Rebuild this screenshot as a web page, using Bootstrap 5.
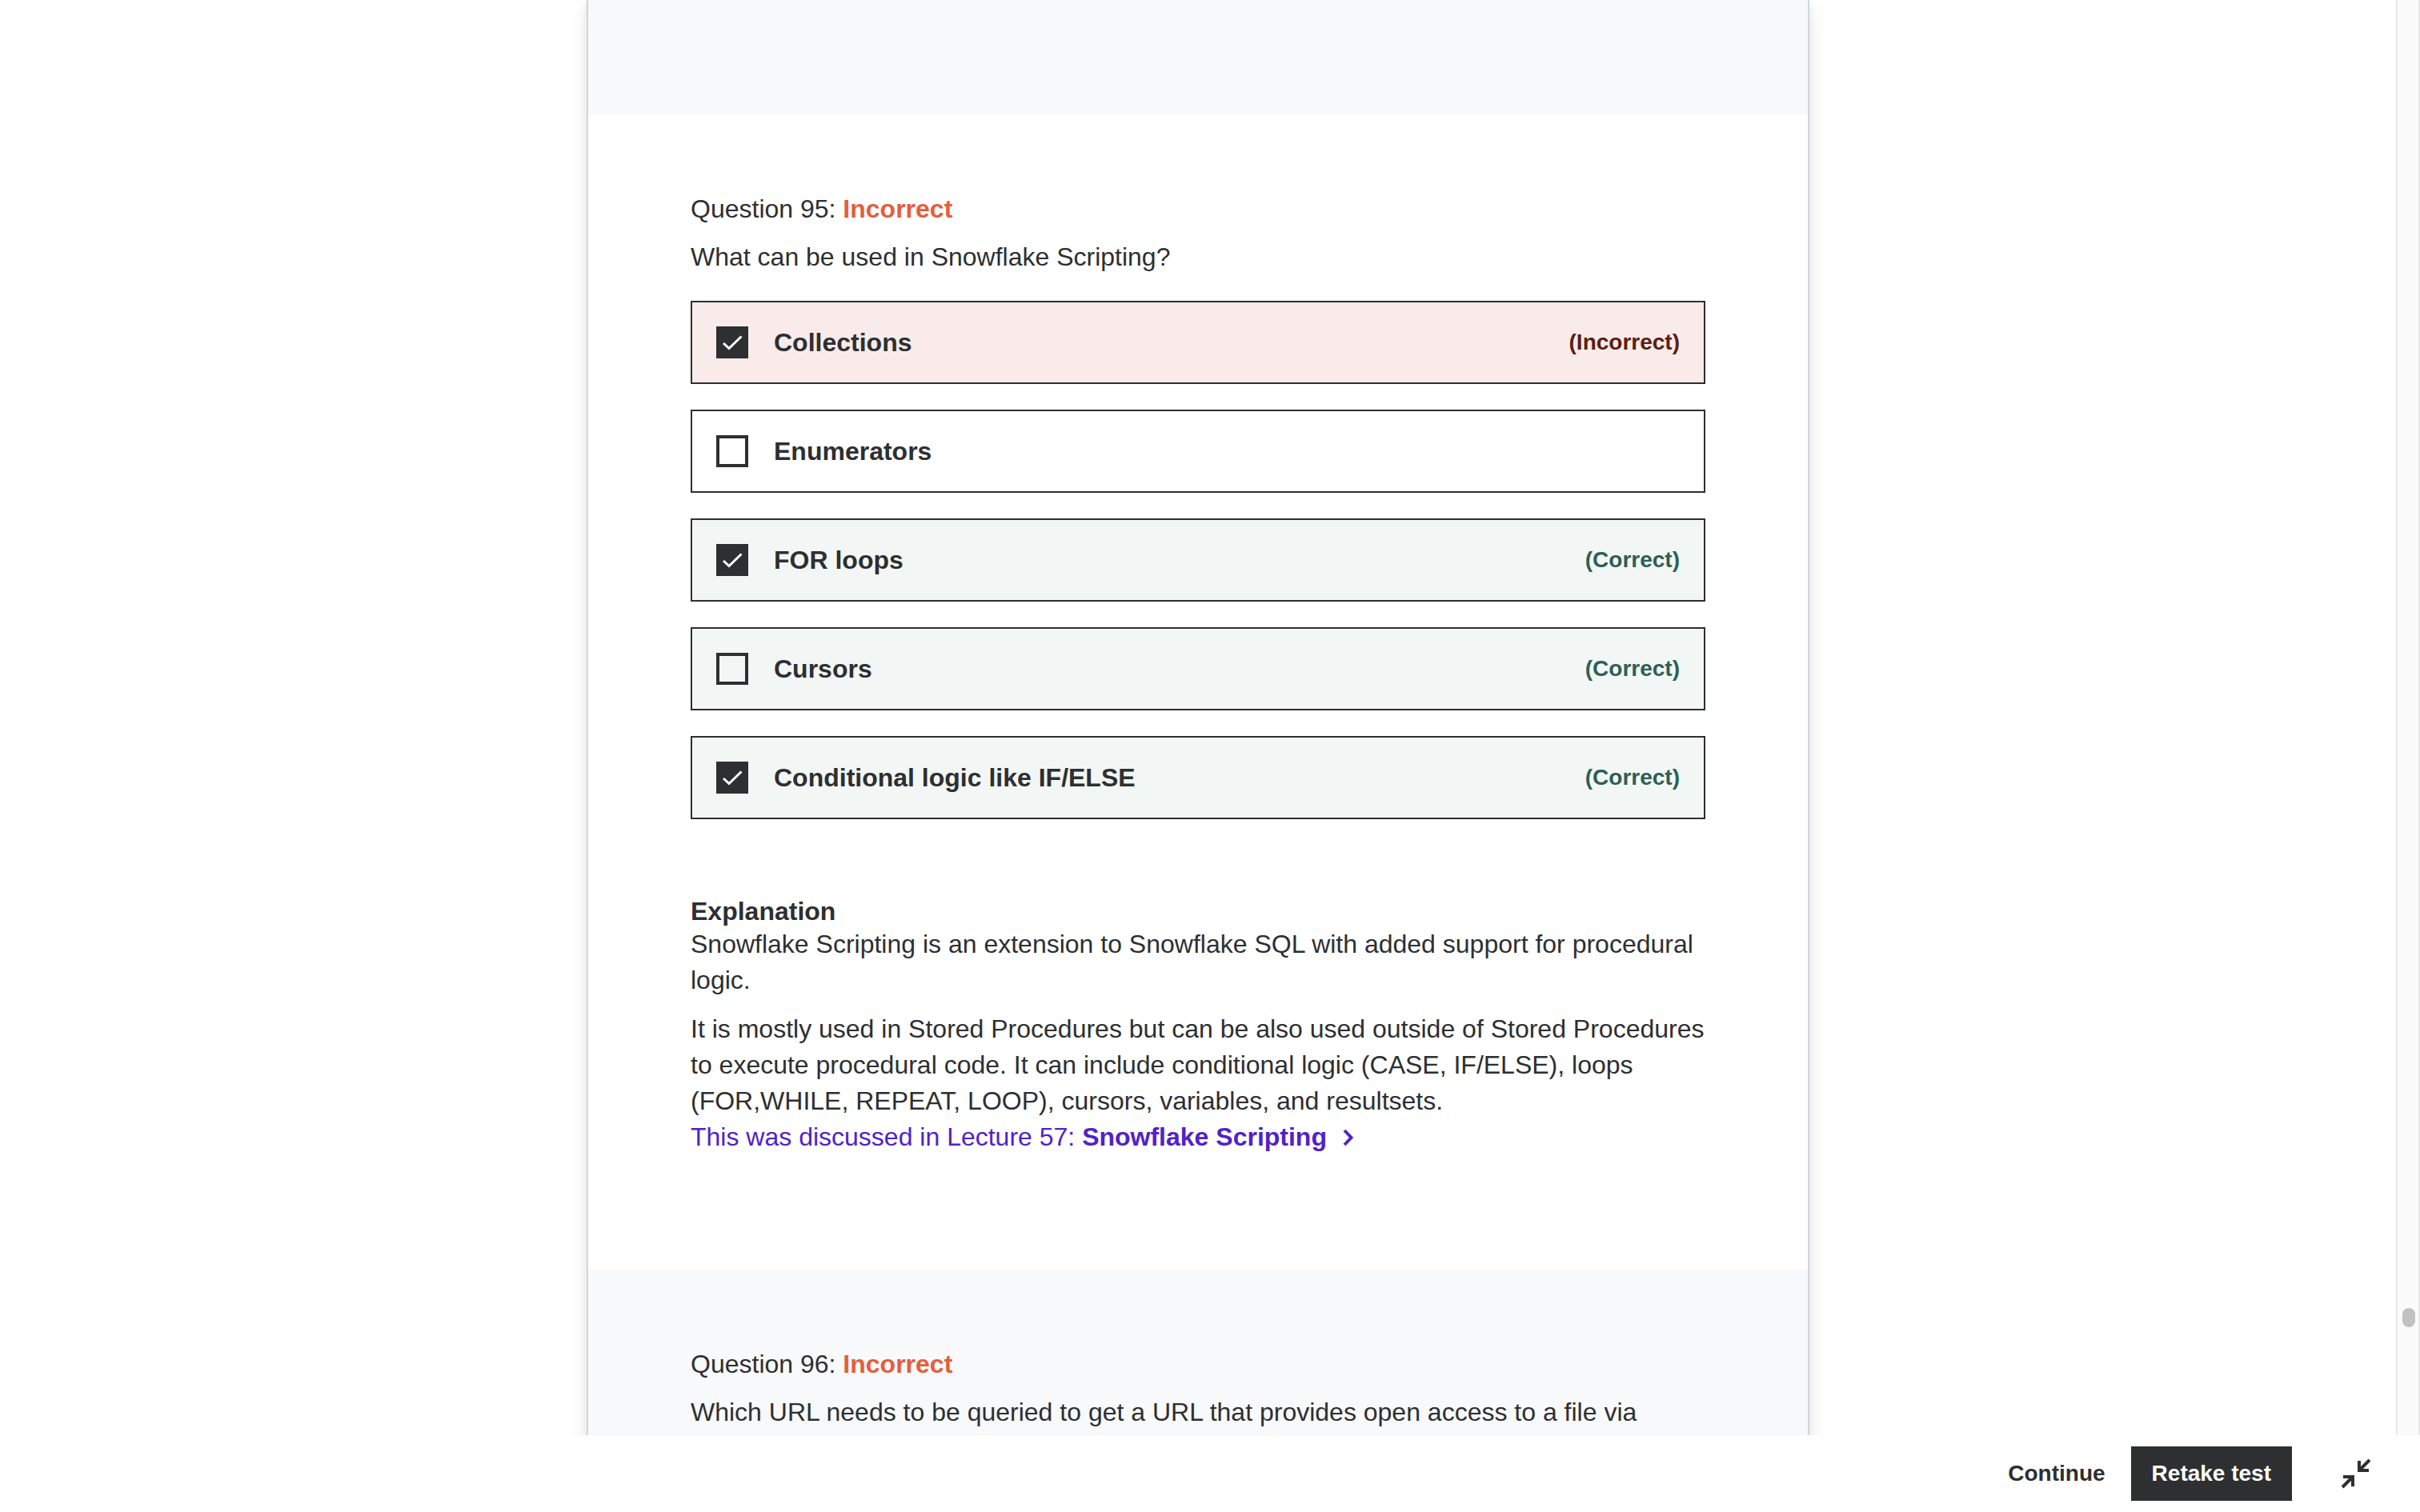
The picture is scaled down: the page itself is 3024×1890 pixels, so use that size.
<!DOCTYPE html>
<html lang="en">
<head>
<meta charset="utf-8">
<meta name="viewport" content="width=device-width, initial-scale=1">
<title>Practice test review</title>
<link rel="stylesheet" href="https://cdn.jsdelivr.net/npm/bootstrap@5.3.0/dist/css/bootstrap.min.css">
<style>
body { font-family: "Liberation Sans", Arial, sans-serif; font-size: 32px; line-height: 45px; color: #2d2f31; background: #fff; }
.review-sheet { width: 1528px; max-width: 100%; border: solid #d1d7dc; border-width: 0 2px; box-shadow: 0 4px 8px rgba(0,0,0,.08), 0 8px 24px rgba(0,0,0,.08); }
.prev-question { height: 143px; }
.tinted { background: #f7f9fb; }
.question { padding: 96px 128px; }
.question h2 { font-size: 32px; line-height: 44px; margin-bottom: 16px; font-weight: 400; }
.question p { margin-bottom: 16px; }
.status-wrong { color: #e35f3c; }
.answers { margin: 32px 0 96px; gap: 32px; }
.answer { border: 2px solid #2d2f31; padding: 28px 30px; gap: 32px; line-height: 44px; }
.answer-wrong { background: #f8ebe9; }
.answer-right { background: #f2f7f6; }
.tick { appearance: none; width: 40px; height: 40px; border: 4px solid #2d2f31; margin: 0; background: transparent; }
.tick:checked { background: #2d2f31; }
.tick-wrap svg { left: 0; top: 0; pointer-events: none; }
.verdict { font-size: 28px; }
.answer-wrong .verdict { color: #5b2014; }
.answer-right .verdict { color: #2f5f53; }
.explain { margin-bottom: 47px; }
.explain h3 { font-size: 32px; line-height: 38px; margin: 0; font-weight: 700; }
.explain .last-par { margin: 0; }
.lecture-link { color: #5022c8; gap: 16px; }
.rail { width: 30px; background: #fafafa; border: solid #e8e8e8; border-width: 0 2px; }
.rail-thumb { width: 16px; height: 24px; border-radius: 8px; background: #c1c1c1; top: 1635px; left: 6px; }
.actions { height: 96px; padding-right: 24px; background: #fff; }
.actions .btn { font-size: 28px; line-height: 36px; color: #2d2f31; border-radius: 0; border: 0; padding: 16px 26px; }
.actions .btn-retake { background: #2d2f31; color: #fff; }
.actions .btn-plain { padding: 16px 8px; }
.actions .btn-shrink { padding: 0 32px; }
</style>
</head>
<body>
<div class="d-flex flex-column vh-100 overflow-hidden">
  <div class="d-flex flex-grow-1 overflow-hidden">
    <main class="flex-grow-1 d-flex flex-column align-items-center">
      <div class="review-sheet bg-white">
        <div class="prev-question tinted"></div>
        <section class="question">
          <h2>Question 95: <strong class="status-wrong">Incorrect</strong></h2>
          <p>What can be used in Snowflake Scripting?</p>
          <div class="answers d-flex flex-column">
            <label class="answer answer-wrong d-flex align-items-center">
              <span class="tick-wrap position-relative d-flex"><input class="tick" type="checkbox" checked><svg class="position-absolute" width="40" height="40" fill="none" stroke="#fff" stroke-width="3"><path d="M9 21l7 6.500 15.500-15"/></svg></span>
              <strong class="flex-grow-1">Collections</strong><strong class="verdict">(Incorrect)</strong>
            </label>
            <label class="answer d-flex align-items-center">
              <span class="tick-wrap d-flex"><input class="tick" type="checkbox"></span>
              <strong class="flex-grow-1">Enumerators</strong>
            </label>
            <label class="answer answer-right d-flex align-items-center">
              <span class="tick-wrap position-relative d-flex"><input class="tick" type="checkbox" checked><svg class="position-absolute" width="40" height="40" fill="none" stroke="#fff" stroke-width="3"><path d="M9 21l7 6.500 15.500-15"/></svg></span>
              <strong class="flex-grow-1">FOR loops</strong><strong class="verdict">(Correct)</strong>
            </label>
            <label class="answer answer-right d-flex align-items-center">
              <span class="tick-wrap d-flex"><input class="tick" type="checkbox"></span>
              <strong class="flex-grow-1">Cursors</strong><strong class="verdict">(Correct)</strong>
            </label>
            <label class="answer answer-right d-flex align-items-center">
              <span class="tick-wrap position-relative d-flex"><input class="tick" type="checkbox" checked><svg class="position-absolute" width="40" height="40" fill="none" stroke="#fff" stroke-width="3"><path d="M9 21l7 6.500 15.500-15"/></svg></span>
              <strong class="flex-grow-1">Conditional logic like IF/ELSE</strong><strong class="verdict">(Correct)</strong>
            </label>
          </div>
          <div class="explain">
            <h3>Explanation</h3>
            <p>Snowflake Scripting is an extension to Snowflake SQL with added support for procedural logic.</p>
            <p class="last-par">It is mostly used in Stored Procedures but can be also used outside of Stored Procedures to execute procedural code. It can include conditional logic (CASE, IF/ELSE), loops (FOR,WHILE, REPEAT, LOOP), cursors, variables, and resultsets.</p>
            <a class="lecture-link d-flex align-items-center text-decoration-none" href="#"><span>This was discussed in Lecture 57: <strong>Snowflake Scripting</strong></span><svg width="24" height="24" fill="none" stroke="currentColor" stroke-width="4"><path d="M6 3l8.500 9L6 21"/></svg></a>
          </div>
        </section>
        <section class="question tinted">
          <h2>Question 96: <strong class="status-wrong">Incorrect</strong></h2>
          <p>Which URL needs to be queried to get a URL that provides open access to a file via</p>
        </section>
      </div>
    </main>
    <div class="rail position-relative flex-shrink-0"><div class="rail-thumb position-absolute"></div></div>
  </div>
  <footer class="actions d-flex align-items-center justify-content-end gap-4 flex-shrink-0">
    <button class="btn btn-plain fw-bold" type="button">Continue</button>
    <button class="btn btn-retake fw-bold" type="button">Retake test</button>
    <button class="btn btn-shrink d-flex" type="button" aria-label="Exit full screen"><svg width="48" height="48" viewBox="0 0 48 48" fill="none" stroke="#2d2f31" stroke-width="4"><path d="M28 8v12h12M41 7L28 20M20 40V28H8M7 41l13-13"/></svg></button>
  </footer>
</div>
<script src="https://cdn.jsdelivr.net/npm/bootstrap@5.3.0/dist/js/bootstrap.bundle.min.js"></script>
</body>
</html>
